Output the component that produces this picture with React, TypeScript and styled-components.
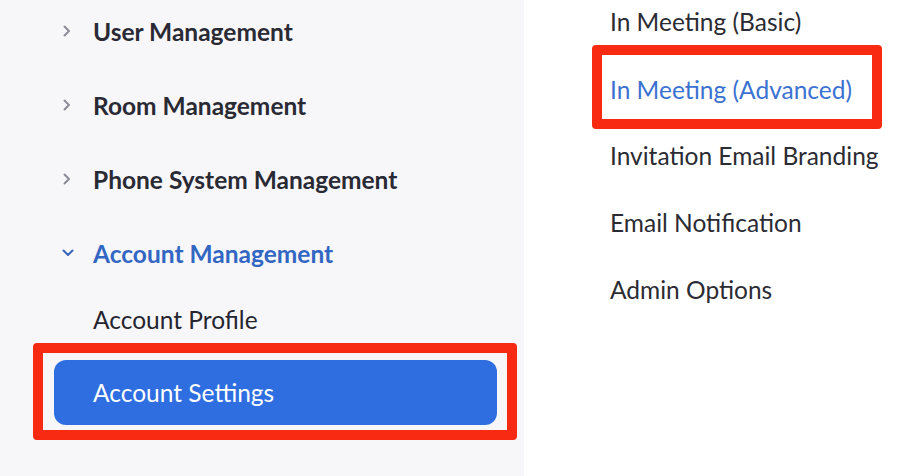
import styled, { createGlobalStyle } from "styled-components";

const GlobalStyle = createGlobalStyle`
  html, body {
    margin: 0;
    padding: 0;
    background: #ffffff;
    font-family: Lato, "Noto Sans", sans-serif;
  }
`;

const Page = styled.div`
  display: flex;
  width: 924px;
  height: 476px;
  overflow: hidden;
  background: #ffffff;
`;

const Sidebar = styled.nav`
  width: 524px;
  flex-shrink: 0;
  background: #f7f7fa;
  display: flex;
  flex-direction: column;
  gap: 12px;
`;

const GroupRow = styled.div<{ active?: boolean }>`
  height: 62px;
  display: flex;
  align-items: center;
  padding-left: 62px;
  font-size: 24.5px;
  font-weight: 700;
  color: ${p => (p.active ? "#3266c2" : "#2a2a34")};
`;

const Caret = styled.span`
  width: 31px;
  display: flex;
  align-items: center;
`;

const SubRow = styled.div`
  height: 47px;
  display: flex;
  align-items: center;
  padding-left: 93px;
  font-size: 24.5px;
  font-weight: 400;
  color: #25252f;
`;

const Highlight = styled.div<{ inset: string }>`
  border: 10px solid #f92a12;
  border-radius: 4px;
  padding: ${p => p.inset};
`;

const SelectedItem = styled.div`
  height: 65px;
  border-radius: 12px;
  background: #2e6ee0;
  color: #ffffff;
  display: flex;
  align-items: center;
  padding-left: 39px;
  font-size: 24.5px;
  font-weight: 400;
`;

const Content = styled.div`
  flex: 1;
  display: flex;
  flex-direction: column;
  padding-left: 68px;
`;

const SettingLink = styled.div<{ active?: boolean }>`
  height: 42px;
  display: flex;
  align-items: center;
  padding-left: 18px;
  font-size: 24.5px;
  font-weight: 400;
  color: ${p => (p.active ? "#3b72d2" : "#2b2b33")};
  white-space: nowrap;
`;

const RightIcon = () => (
  <svg width="9" height="12" viewBox="0 0 9 12">
    <path d="M2.5 1.5 L7 6 L2.5 10.5" fill="none" stroke="#8c8c96" strokeWidth="2" strokeLinecap="round" strokeLinejoin="round" />
  </svg>
);

const DownIcon = () => (
  <svg width="12" height="8" viewBox="0 0 12 8">
    <path d="M1.5 1.5 L6 6 L10.5 1.5" fill="none" stroke="#3a66b8" strokeWidth="2" strokeLinecap="round" strokeLinejoin="round" />
  </svg>
);

const groups = ["User Management", "Room Management", "Phone System Management"];

export default function App() {
  return (
    <>
      <GlobalStyle />
      <Page>
        <Sidebar>
          {groups.map(g => (
            <GroupRow key={g}>
              <Caret>
                <RightIcon />
              </Caret>
              {g}
            </GroupRow>
          ))}
          <GroupRow active>
            <Caret>
              <DownIcon />
            </Caret>
            Account Management
          </GroupRow>
          <div>
            <SubRow>Account Profile</SubRow>
            <div style={{ paddingLeft: 33, width: 484 }}>
              <Highlight inset="7px 10px 5px 11px">
                <SelectedItem>Account Settings</SelectedItem>
              </Highlight>
            </div>
          </div>
        </Sidebar>
        <Content>
          <SettingLink>In Meeting (Basic)</SettingLink>
          <div style={{ marginTop: 3, width: 290 }}>
            <Highlight inset="13px 0 9px 0">
              <SettingLink active style={{ paddingLeft: 8 }}>In Meeting (Advanced)</SettingLink>
            </Highlight>
          </div>
          <SettingLink style={{ marginTop: 5 }}>Invitation Email Branding</SettingLink>
          <SettingLink style={{ marginTop: 25 }}>Email Notification</SettingLink>
          <SettingLink style={{ marginTop: 25 }}>Admin Options</SettingLink>
        </Content>
      </Page>
    </>
  );
}
